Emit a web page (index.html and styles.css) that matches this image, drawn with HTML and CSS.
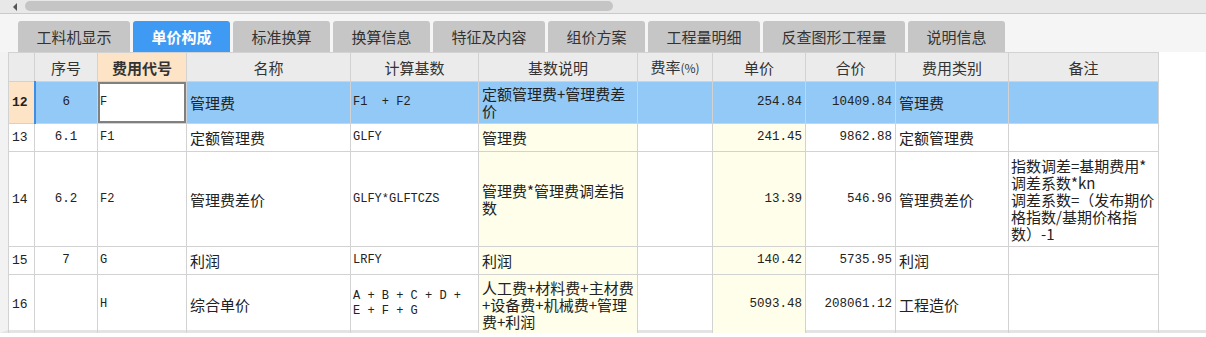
FILE: index.html
```html
<!DOCTYPE html>
<html lang="zh-CN">
<head>
    <meta charset="UTF-8">
    <title>单价构成</title>
    <link rel="stylesheet" href="styles.css">
</head>
<body>
    <!-- horizontal scroll strip -->
    <div class="hscroll">
        <span class="hscroll-arrow"></span>
        <span class="hscroll-thumb"></span>
    </div>

    <!-- tab strip -->
    <div class="tabs">
        <div class="tab wide">工料机显示</div>
        <div class="tab active">单价构成</div>
        <div class="tab">标准换算</div>
        <div class="tab">换算信息</div>
        <div class="tab wide">特征及内容</div>
        <div class="tab">组价方案</div>
        <div class="tab wide">工程量明细</div>
        <div class="tab xwide">反查图形工程量</div>
        <div class="tab">说明信息</div>
    </div>

    <!-- unit price grid -->
    <div class="grid-wrap">
        <table class="grid">
            <colgroup>
                <col style="width:26px">
                <col style="width:63px">
                <col style="width:89px">
                <col style="width:164px">
                <col style="width:128px">
                <col style="width:159px">
                <col style="width:75px">
                <col style="width:93px">
                <col style="width:90px">
                <col style="width:113px">
                <col style="width:150px">
            </colgroup>
            <thead>
                <tr>
                    <th class="rownum"></th>
                    <th>序号</th>
                    <th class="sorted">费用代号</th>
                    <th>名称</th>
                    <th>计算基数</th>
                    <th>基数说明</th>
                    <th>费率<small>(%)</small></th>
                    <th>单价</th>
                    <th>合价</th>
                    <th>费用类别</th>
                    <th>备注</th>
                </tr>
            </thead>
            <tbody>
                <tr class="selected r42">
                    <td class="rownum">12</td>
                    <td class="num center">6</td>
                    <td class="code current">F</td>
                    <td>管理费</td>
                    <td class="code">F1 &nbsp;+ F2</td>
                    <td class="desc top">定额管理费+管理费差价</td>
                    <td></td>
                    <td class="num right">254.84</td>
                    <td class="num right">10409.84</td>
                    <td>管理费</td>
                    <td></td>
                </tr>
                <tr class="r28">
                    <td class="rownum">13</td>
                    <td class="num center">6.1</td>
                    <td class="code">F1</td>
                    <td>定额管理费</td>
                    <td class="code">GLFY</td>
                    <td class="desc">管理费</td>
                    <td></td>
                    <td class="num right tinted">241.45</td>
                    <td class="num right">9862.88</td>
                    <td>定额管理费</td>
                    <td></td>
                </tr>
                <tr class="r95">
                    <td class="rownum">14</td>
                    <td class="num center">6.2</td>
                    <td class="code">F2</td>
                    <td>管理费差价</td>
                    <td class="code">GLFY*GLFTCZS</td>
                    <td class="desc">管理费*管理费调差指数</td>
                    <td></td>
                    <td class="num right tinted">13.39</td>
                    <td class="num right">546.96</td>
                    <td>管理费差价</td>
                    <td class="note">指数调差=基期费用*调差系数*kn<br>调差系数=（发布期价格指数/基期价格指数）-1</td>
                </tr>
                <tr class="r28">
                    <td class="rownum">15</td>
                    <td class="num center">7</td>
                    <td class="code">G</td>
                    <td>利润</td>
                    <td class="code">LRFY</td>
                    <td class="desc">利润</td>
                    <td></td>
                    <td class="num right tinted">140.42</td>
                    <td class="num right">5735.95</td>
                    <td>利润</td>
                    <td></td>
                </tr>
                <tr class="r59">
                    <td class="rownum">16</td>
                    <td class="num center"></td>
                    <td class="code">H</td>
                    <td>综合单价</td>
                    <td class="code">A + B + C + D + E + F + G</td>
                    <td class="desc">人工费+材料费+主材费+设备费+机械费+管理费+利润</td>
                    <td></td>
                    <td class="num right tinted">5093.48</td>
                    <td class="num right">208061.12</td>
                    <td>工程造价</td>
                    <td></td>
                </tr>
            </tbody>
        </table>
    </div>
</body>
</html>
```

FILE: styles.css
```css
body {
    margin: 0;
    background: #ffffff;
    font-family: "Noto Sans CJK SC", "Noto Sans", sans-serif;
    color: #222;
}
.hscroll {
    position: relative;
    height: 13px;
    background: #e8e8e8;
    border-bottom: 1px solid #c9c9c9;
}
.hscroll-arrow {
    position: absolute;
    left: 13px;
    top: 3px;
    width: 0;
    height: 0;
    border-top: 4px solid transparent;
    border-bottom: 4px solid transparent;
    border-right: 4px solid #555;
}
.hscroll-thumb {
    position: absolute;
    left: 25px;
    top: 1px;
    width: 588px;
    height: 10px;
    border-radius: 5px;
    background: #c5c5c5;
}
.tabs {
    display: flex;
    gap: 3px;
    padding: 7px 0 0 18px;
    height: 31px;
    background: #f5f5f5;
    box-sizing: content-box;
}
.tab {
    width: 97px;
    height: 31px;
    line-height: 31px;
    text-align: center;
    font-size: 15px;
    color: #333;
    background: #c6c6c6;
    border-radius: 3px 3px 0 0;
}
.tab.wide {
    width: 112px;
}
.tab.xwide {
    width: 142px;
}
.tab.active {
    background: #3f9af4;
    color: #ffffff;
    font-weight: bold;
}
.grid-wrap {
    background: #ffffff;
    border-left: 8px solid #f2f2f2;
    border-bottom: 3px solid #e4e4e4;
    height: 281px;
    box-sizing: border-box;
}
.grid {
    border-collapse: collapse;
    table-layout: fixed;
    width: 1150px;
    font-size: 15px;
}
.grid th,
.grid td {
    border: 1px solid #d2d2d2;
    padding: 0 3px;
    overflow: hidden;
    vertical-align: middle;
    line-height: 17px;
}
.grid th {
    height: 28px;
    background: #ebebeb;
    font-weight: normal;
    color: #333;
    text-align: center;
}
.grid th small {
    font-size: 12px;
}
.grid th.sorted {
    background: #fde4c6;
    font-weight: bold;
}
.r28 {
    height: 28px;
}
.r42 {
    height: 42px;
}
.r59 {
    height: 59px;
}
.r95 {
    height: 95px;
}
.grid td.rownum {
    padding: 0 3px;
    font-family: "Liberation Mono", monospace;
    font-size: 13px;
}
.num,
.code {
    font-family: "Liberation Mono", monospace;
    font-size: 12.5px;
}
.grid td.code {
    padding-left: 2px;
    font-size: 12px;
    line-height: 15px;
}
.center {
    text-align: center;
}
.right {
    text-align: right;
}
.desc,
.tinted {
    background: #fefeea;
}
.grid td.top {
    vertical-align: top;
    padding-top: 3px;
}
.grid td.note {
    padding: 0 1px 0 2px;
    line-height: 17px;
}
.selected td {
    background: #92c9f6;
}
.selected td.rownum {
    background: #fde4c6;
    font-weight: bold;
    border-right: 2px solid #3d8fe6;
}
.selected td.current {
    background: #ffffff;
    box-shadow: inset 0 0 0 2px #808080;
}
```
